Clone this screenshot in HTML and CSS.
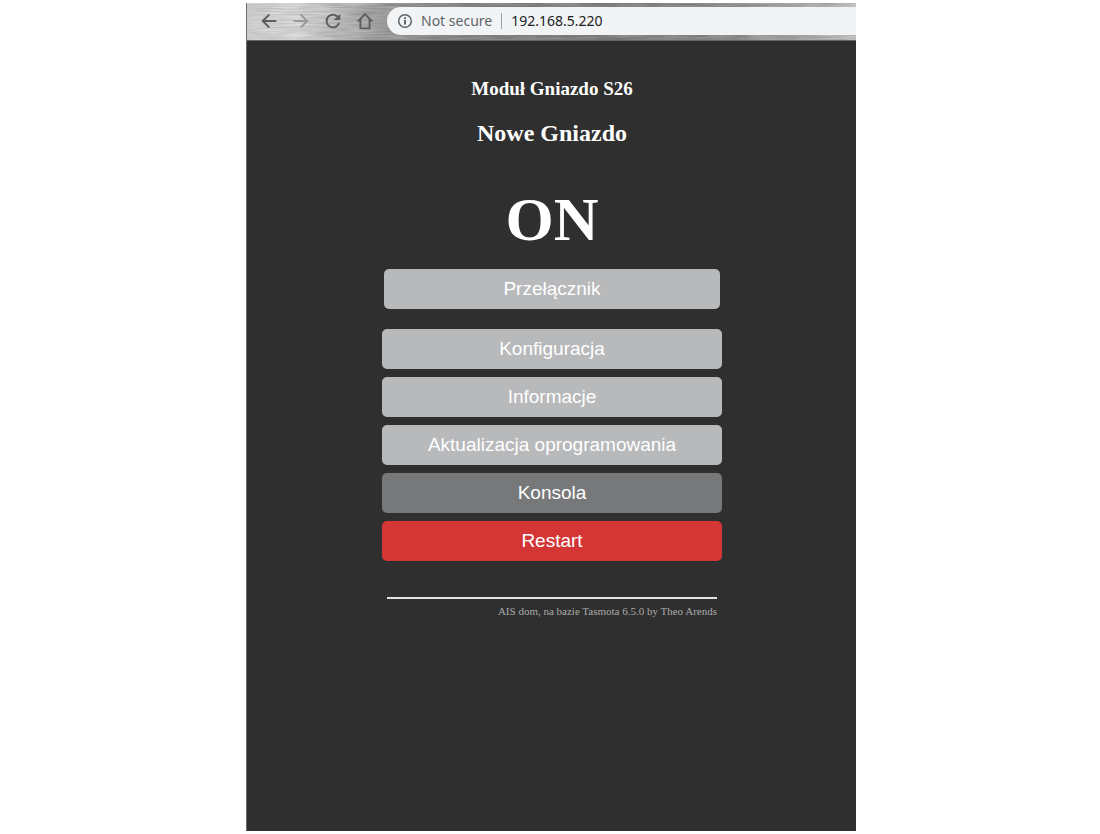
FILE: index.html
```html
<!DOCTYPE html>
<html lang="pl">
<head>
<meta charset="utf-8">
<meta name="viewport" content="width=device-width, initial-scale=1">
<title>Nowe Gniazdo</title>
<link rel="stylesheet" href="styles.css">
</head>
<body>
<div class="window">
  <header class="toolbar">
    <svg class="brushed" aria-hidden="true" preserveAspectRatio="none">
      <filter id="grain" x="0" y="0" width="100%" height="100%" color-interpolation-filters="sRGB">
        <feTurbulence type="fractalNoise" baseFrequency="0.03 0.7" numOctaves="3" seed="4"/>
        <feColorMatrix type="matrix" values="1 0 0 0 0  1 0 0 0 0  1 0 0 0 0  0 0 0 0 1"/>
      </filter>
      <rect width="100%" height="100%" filter="url(#grain)"/>
    </svg>
    <nav class="nav">
      <button class="nav-button" type="button" aria-label="Back"><svg viewBox="0 0 24 24"><path d="M20 10.800H7.830l5.300-5.300L11.700 4l-8 8 8 8 1.430-1.500-5.300-5.300H20z"/></svg></button>
      <button class="nav-button nav-button-off" type="button" aria-label="Forward"><svg viewBox="0 0 24 24"><path d="M4 10.800h12.170l-5.300-5.300L12.300 4l8 8-8 8-1.430-1.500 5.300-5.300H4z"/></svg></button>
      <button class="nav-button" type="button" aria-label="Reload"><svg viewBox="0 0 24 24"><path d="M17.65 6.35A7.96 7.96 0 0 0 12 4a8 8 0 1 0 7.73 10h-2.280A5.800 5.800 0 1 1 12 6.200c1.600 0 3 .6 4.050 1.700L13 11h7V4z"/></svg></button>
      <button class="nav-button" type="button" aria-label="Home"><svg viewBox="0 0 24 24"><path fill-rule="evenodd" d="M12 3 2.800 12.500H6V21h12v-8.500h3.200zM12 5.900l4 4.100V19H8v-9z"/></svg></button>
    </nav>
    <div class="address">
      <svg class="info" viewBox="0 0 16 16" aria-hidden="true"><circle cx="8" cy="8" r="6.300" fill="none" stroke="currentColor" stroke-width="1.500"/><path fill="currentColor" d="M7 7h2v4.500H7zM7 4.300h2V6H7z"/></svg>
      <label class="security" for="url">Not secure</label>
      <input class="url" id="url" type="text" value="192.168.5.220" spellcheck="false">
    </div>
  </header>
  <main class="page">
    <div class="panel">
      <h3 class="module">Moduł Gniazdo S26</h3>
      <h2 class="name">Nowe Gniazdo</h2>
      <div class="state">ON</div>
      <div class="toggle"><button class="button" type="button">Przełącznik</button></div>
      <div class="menu">
        <button class="button" type="button">Konfiguracja</button>
        <button class="button" type="button">Informacje</button>
        <button class="button" type="button">Aktualizacja oprogramowania</button>
        <button class="button button-console" type="button">Konsola</button>
        <button class="button button-restart" type="button">Restart</button>
      </div>
      <footer class="footer"><a class="credit" href="#">AIS dom, na bazie Tasmota 6.5.0 by Theo Arends</a></footer>
    </div>
  </main>
</div>
</body>
</html>
```

FILE: styles.css
```css
* {
  box-sizing: border-box;
}

body {
  margin: 0;
  padding: 3px 0 3px 2px;
  min-height: 100vh;
  display: flex;
  justify-content: center;
  background: #fff;
  font-family: "Liberation Serif", "Times New Roman", serif;
}

.window {
  width: 100%;
  max-width: 610px;
  display: flex;
  flex-direction: column;
  border-left: 1px solid #6c6c6c;
  background: #2f2f2f;
}

.toolbar {
  position: relative;
  display: flex;
  align-items: center;
  height: 38px;
  padding: 0 0 1px 6px;
  border-bottom: 1px solid #666;
  background: linear-gradient(90deg, #dedede, #e6e6e6 8%, #c6c6c6 15%, #9e9e9e 23%, #868686 35%, #808080 60%, #949494 82%, #ccc);
}

.brushed {
  position: absolute;
  inset: 0;
  width: 100%;
  height: 100%;
  opacity: 0.2;
}

.nav {
  position: relative;
  display: flex;
}

.nav-button {
  display: flex;
  align-items: center;
  justify-content: center;
  width: 32px;
  height: 32px;
  padding: 0;
  border: 0;
  background: none;
  color: #5c5c5c;
}

.nav-button svg {
  width: 22px;
  height: 22px;
  fill: currentColor;
}

.nav-button-off {
  color: #999;
}

.address {
  position: relative;
  flex: 1;
  min-width: 0;
  display: flex;
  align-items: center;
  height: 28px;
  margin-left: 6px;
  padding-left: 10px;
  border-radius: 14px 0 0 14px;
  background: #f1f3f4;
  font: 14px/20px "Noto Sans", sans-serif;
  color: #5f6368;
}

.info {
  width: 16px;
  height: 16px;
  margin-right: 8px;
}

.security {
  white-space: nowrap;
}

.url {
  flex: 1;
  min-width: 0;
  height: 16px;
  margin-left: 9px;
  padding: 0 0 0 9px;
  border: 0;
  border-left: 1px solid #9aa0a6;
  background: none;
  font: inherit;
  color: #202124;
  outline: 0;
}

.page {
  flex: 1;
  padding: 37px 12px 24px 13px;
  color: #fff;
  text-align: center;
}

.panel {
  max-width: 340px;
  margin: 0 auto;
}

.module {
  margin: 0 0 19px;
  font-size: 19px;
  line-height: 22px;
}

.name {
  margin: 0 0 36px;
  font-size: 24px;
  line-height: 28px;
}

.state {
  font-size: 62px;
  font-weight: bold;
  line-height: 72px;
}

.toggle {
  padding: 14px 2px 20px;
}

.menu {
  display: grid;
  gap: 8px;
}

.button {
  display: block;
  width: 100%;
  height: 40px;
  padding: 0;
  border: 0;
  border-radius: 5px;
  background: #b8b9bb;
  color: #fff;
  font: 19px/40px "Liberation Sans", Arial, sans-serif;
  cursor: pointer;
}

.button-console {
  background: #777879;
}

.button-restart {
  background: #d43535;
}

.footer {
  margin: 36px 5px 0;
  padding-top: 6px;
  border-top: 2px solid #e4e4e4;
  text-align: right;
  font-size: 11px;
  line-height: 13px;
}

.credit {
  color: #aaa;
  text-decoration: none;
}
```
